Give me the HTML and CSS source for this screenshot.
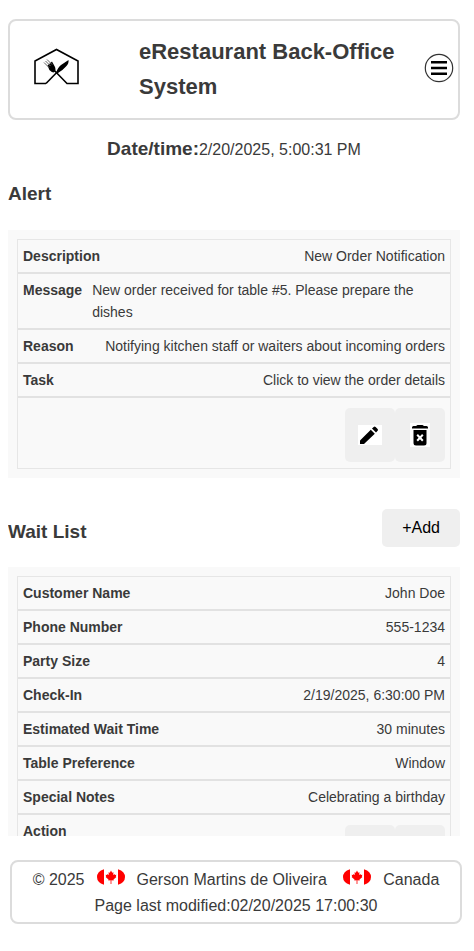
FILE: index.html
```html
<!DOCTYPE html>
<html lang="en">
<head>
<meta charset="utf-8">
<meta name="viewport" content="width=device-width, initial-scale=1">
<title>eRestaurant Back-Office System</title>
<link rel="stylesheet" href="styles.css">
</head>
<body>
<svg class="defs" aria-hidden="true">
  <symbol id="pencil" viewBox="0 0 24 20">
    <path d="M2 19v-3Q2 15.500 2.500 15L12.800 4.700l4 4L6.500 18.500Q6 19 5.500 19zM14 3.600l1.700-1.700q.9-.9 1.900 0l2 2q.9.900 0 1.900L18 7.500z"/>
  </symbol>
  <symbol id="trash" viewBox="0 0 20 24">
    <path d="M2 4.500q0-1.500 1.500-1.500H6l1.500-1h5L14 3h2.500Q18 3 18 4.500V5.500H2z"/>
    <path d="M3.500 7h13v13q0 2.500-2.500 2.500H6Q3.500 22.500 3.500 20z"/>
    <path d="M7.200 11.700l5.600 6M12.800 11.700l-5.600 6" fill="none" stroke="#fff" stroke-width="2"/>
  </symbol>
  <symbol id="flag" viewBox="0 0 28 16">
    <path fill="#f00" d="M7 .2v15.600Q0 13.500 0 8T7 .2zM21 .2v15.600Q28 13.500 28 8T21 .2z"/>
    <path fill="#f00" d="M14 1.500l1.200 2.200 1.300-.5-.4 2.900 1.400-1 .4.800 1.500-.1-.6 1.700.6.600-2.900 2.400.2 1.100-2.300-.3V15h-.8v-3.700l-2.300.3.200-1.100-2.900-2.400.6-.6-.6-1.700 1.500.1.400-.8 1.400 1-.4-2.900 1.300.5z"/>
  </symbol>
</svg>

<header class="header panel">
  <a class="logo" href="#" aria-label="Home">
    <svg viewBox="1 0 46 42" width="46" height="42" aria-hidden="true">
      <path d="M13 35.500H2V13L23.500 1.500 45 13v22.500H34L17 18" fill="none" stroke="#000" stroke-width="1.600"/>
      <path d="M13 35.500L33 15" fill="none" stroke="#000" stroke-width="1.600"/>
      <path d="M14.500 17.500l4.500-4 3 5.500q1.200 3.500-.6 5t-5-2z"/>
      <path d="M11 14.500l5 5M12.500 13l5 5M14 11.500l5 5" fill="none" stroke="#666" stroke-width="1"/>
      <path d="M23 25.500q1-5 5-8.500l7.500-5q.5 3.500-2.500 6.500-3.500 4-8 6.500z"/>
    </svg>
  </a>
  <h1 class="title">eRestaurant Back-Office System</h1>
  <button class="menu" type="button" aria-label="Menu">
    <svg viewBox="0 0 30 32" width="30" height="32" aria-hidden="true">
      <circle cx="15" cy="15" r="13.700" fill="none" stroke="#333" stroke-width="1.200"/>
      <path d="M7 9.200h16M7 15h16M7 20.800h16" stroke="#000" stroke-width="2.600"/>
    </svg>
  </button>
</header>

<main class="main">
  <p class="clock"><strong class="clock-label">Date/time:</strong><time>2/20/2025, 5:00:31 PM</time></p>

  <section>
    <div class="section-head section-head-plain"><h2>Alert</h2></div>
    <div class="card">
      <table class="record">
        <tbody>
          <tr><th scope="row">Description</th><td>New Order Notification</td></tr>
          <tr><th scope="row">Message</th><td>New order received for table #5. Please prepare the dishes</td></tr>
          <tr><th scope="row">Reason</th><td>Notifying kitchen staff or waiters about incoming orders</td></tr>
          <tr><th scope="row">Task</th><td>Click to view the order details</td></tr>
          <tr class="actions"><td>
            <button class="action" type="button" aria-label="Edit alert"><svg class="pencil"><use href="#pencil"/></svg></button><button class="action" type="button" aria-label="Delete alert"><svg class="trash"><use href="#trash"/></svg></button>
          </td></tr>
        </tbody>
      </table>
    </div>
  </section>

  <section>
    <div class="section-head"><h2>Wait List</h2><button class="add" type="button">+Add</button></div>
    <div class="card">
      <table class="record">
        <tbody>
          <tr><th scope="row">Customer Name</th><td>John Doe</td></tr>
          <tr><th scope="row">Phone Number</th><td>555-1234</td></tr>
          <tr><th scope="row">Party Size</th><td>4</td></tr>
          <tr><th scope="row">Check-In</th><td>2/19/2025, 6:30:00 PM</td></tr>
          <tr><th scope="row">Estimated Wait Time</th><td>30 minutes</td></tr>
          <tr><th scope="row">Table Preference</th><td>Window</td></tr>
          <tr><th scope="row">Special Notes</th><td>Celebrating a birthday</td></tr>
          <tr class="actions"><th scope="row">Action</th><td>
            <button class="action" type="button" aria-label="Edit entry"><svg class="pencil"><use href="#pencil"/></svg></button><button class="action" type="button" aria-label="Delete entry"><svg class="trash"><use href="#trash"/></svg></button>
          </td></tr>
        </tbody>
      </table>
    </div>
  </section>
</main>

<footer class="footer panel">
  <p class="credits"><span>© 2025</span><svg class="flag" role="img" aria-label="Canadian flag"><use href="#flag"/></svg><span>Gerson Martins de Oliveira&nbsp;</span><svg class="flag" role="img" aria-label="Canadian flag"><use href="#flag"/></svg><span>Canada</span></p>
  <p>Page last modified:02/20/2025 17:00:30</p>
</footer>
</body>
</html>
```
FILE: styles.css
```css
* {
  box-sizing: border-box;
}

body {
  display: flex;
  flex-direction: column;
  height: 100vh;
  margin: 0;
  padding: 19px 14px 27px 8px;
  background: #fff;
  color: #3a3a3a;
  font: 16px/26px "Liberation Sans", Arial, sans-serif;
}

h1,
h2,
p {
  margin: 0;
}

button {
  padding: 0;
  border: 0;
  font: inherit;
  cursor: pointer;
}

.defs {
  position: absolute;
  width: 0;
  height: 0;
}

.panel {
  border: 2px solid #dcdcdc;
  border-radius: 8px;
}

.header {
  display: flex;
  flex: none;
  align-items: center;
  padding: 13px 4px 14px 24px;
}

.logo,
.menu,
.menu svg,
.logo svg {
  display: block;
}

.title {
  flex: 1;
  margin-left: 59px;
  font-size: 22px;
  line-height: 35px;
}

.menu {
  margin-left: 16px;
  background: none;
}

.main {
  flex: 1;
  min-height: 0;
  overflow-y: auto;
  scrollbar-width: none;
}

.clock {
  padding-top: 16px;
  text-align: center;
}

.clock-label {
  font-size: 19px;
}

.section-head {
  display: flex;
  align-items: flex-end;
  justify-content: space-between;
  padding: 31px 0 20px;
}

.section-head-plain {
  padding: 16px 0 21px;
}

h2 {
  font-size: 19px;
  line-height: 30px;
}

.add {
  padding: 6px 20px;
  border-radius: 5px;
  background: #efefef;
  color: #000;
}

.card {
  padding: 9px;
  background: #f9f9f9;
}

.record {
  display: block;
  border: 1px solid #e6e6e6;
  font-size: 14px;
  line-height: 22px;
}

.record tbody {
  display: block;
}

.record tr {
  display: flex;
  justify-content: space-between;
  gap: 10px;
  padding: 5px;
  border-bottom: 2px solid #e2e2e2;
}

.record tr:last-child {
  border-bottom: 0;
}

.record th,
.record td {
  padding: 0;
  text-align: left;
}

.record .actions td {
  display: flex;
  margin-left: auto;
  padding: 5px 0 1px;
}

.action {
  display: flex;
  align-items: center;
  justify-content: center;
  width: 50px;
  height: 54px;
  border-radius: 5px;
  background: #efefef;
}

.action svg {
  background: #fff;
}

.pencil {
  width: 24px;
  height: 20px;
}

.trash {
  width: 20px;
  height: 24px;
}

.footer {
  flex: none;
  margin: 24px -2px 0 2px;
  padding: 5px 4px 3px;
  text-align: center;
}

.credits {
  display: flex;
  align-items: center;
  justify-content: center;
  gap: 12px;
}

.flag {
  width: 28px;
  height: 16px;
  margin-bottom: 6px;
}
```
